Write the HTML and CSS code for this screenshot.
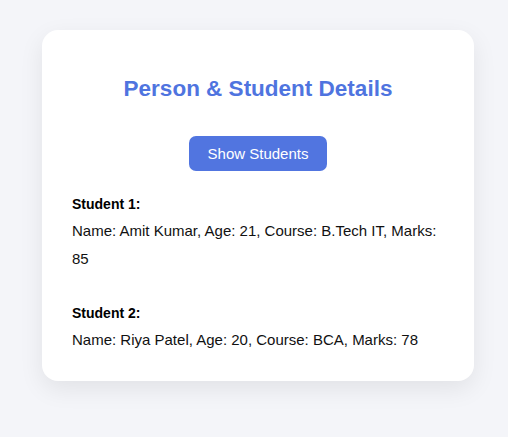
FILE: index.html
```html
<!DOCTYPE html>
<html>
<head>
<meta charset="utf-8">
<link rel="stylesheet" href="styles.css">
</head>
<body>
<div class="card">
  <h2 class="title">Person &amp; Student Details</h2>
  <div class="actions"><button class="btn">Show Students</button></div>
  <div class="list">
    <div class="student">
      <div class="label">Student 1:</div>
      <div class="info">Name: Amit Kumar, Age: 21, Course: B.Tech IT, Marks: 85</div>
    </div>
    <div class="student">
      <div class="label">Student 2:</div>
      <div class="info">Name: Riya Patel, Age: 20, Course: BCA, Marks: 78</div>
    </div>
  </div>
</div>
</body>
</html>
```
FILE: styles.css
```css
html, body { margin: 0; padding: 0; }
body {
  background: #f4f5f9;
  font-family: "Liberation Sans", Arial, sans-serif;
  width: 508px;
  height: 437px;
  overflow: hidden;
}
.card {
  box-sizing: border-box;
  width: 432px;
  margin: 30px 0 0 42px;
  padding: 46px 30px 27px;
  background: #fff;
  border-radius: 16px;
  box-shadow: 0 8px 24px rgba(0,0,0,0.08);
}
.title {
  margin: 0;
  text-align: center;
  color: #4f74df;
  font-size: 22.5px;
  font-weight: bold;
  line-height: 26px;
}
.actions {
  display: flex;
  justify-content: center;
  margin-top: 34px;
}
.btn {
  width: 138px;
  height: 35px;
  border: none;
  border-radius: 7px;
  background: #5175e0;
  color: #fff;
  font-family: inherit;
  font-size: 15px;
}
.list {
  margin-top: 20px;
  display: flex;
  flex-direction: column;
  gap: 27px;
}
.label {
  font-weight: bold;
  font-size: 14px;
  line-height: 26px;
}
.info {
  font-size: 15px;
  line-height: 28px;
  color: #111;
}
```
